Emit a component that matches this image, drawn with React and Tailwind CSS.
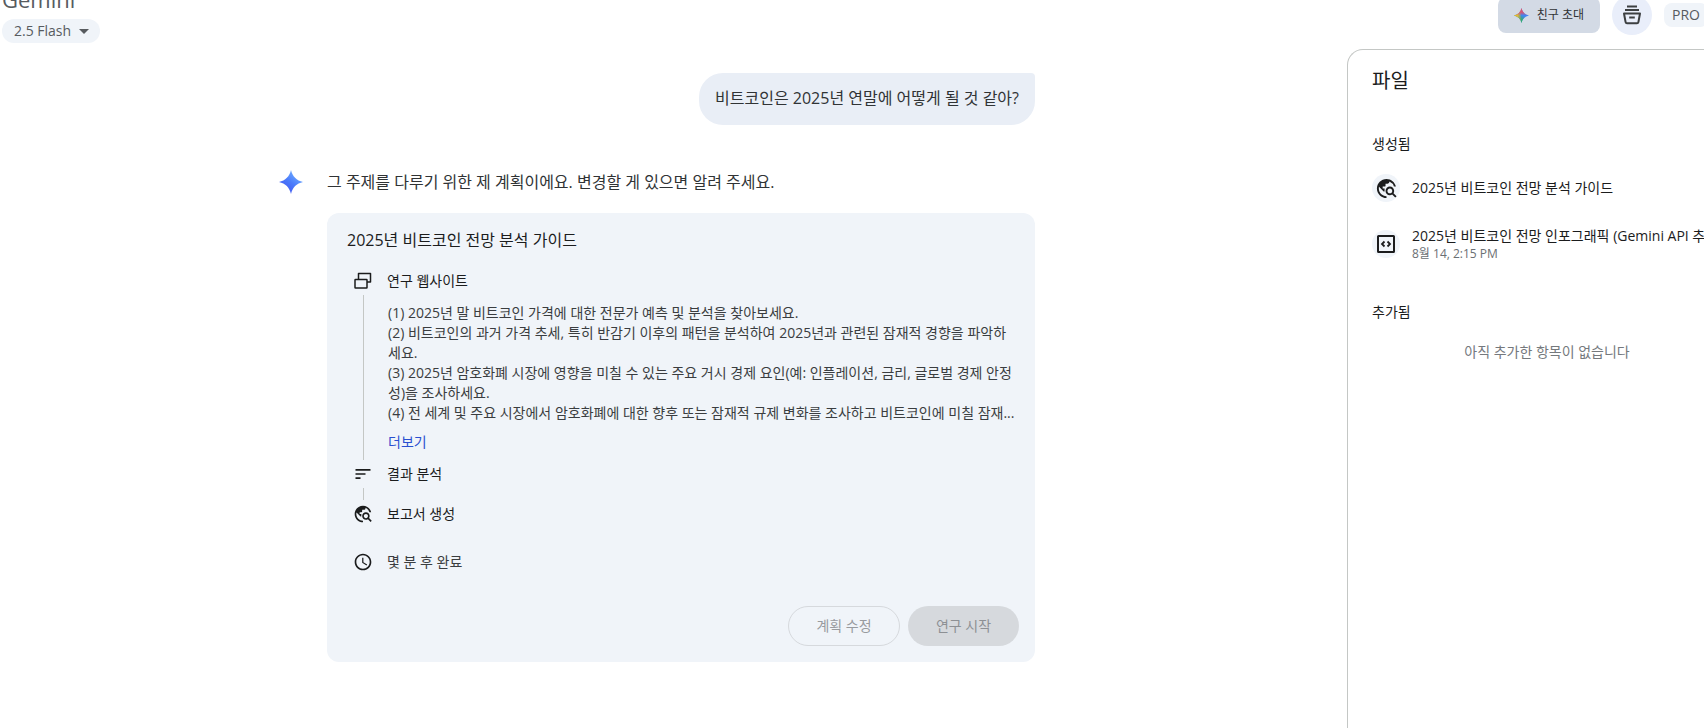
import { MdTravelExplore, MdSort, MdSchedule, MdArrowDropDown } from 'react-icons/md'

const planSteps = [
	'(1) 2025년 말 비트코인 가격에 대한 전문가 예측 및 분석을 찾아보세요.',
	'(2) 비트코인의 과거 가격 추세, 특히 반감기 이후의 패턴을 분석하여 2025년과 관련된 잠재적 경향을 파악하세요.',
	'(3) 2025년 암호화폐 시장에 영향을 미칠 수 있는 주요 거시 경제 요인(예: 인플레이션, 금리, 글로벌 경제 안정성)을 조사하세요.',
	'(4) 전 세계 및 주요 시장에서 암호화폐에 대한 향후 또는 잠재적 규제 변화를 조사하고 비트코인에 미칠 잠재...'
]

const SPARK = 'M12 0C13.3 6.3 17.7 10.7 24 12C17.7 13.3 13.3 17.7 12 24C10.7 17.7 6.3 13.3 0 12C6.3 10.7 10.7 6.3 12 0Z'

const GeminiSpark = () => (
	<svg viewBox="0 0 24 24" className="size-6 shrink-0" aria-hidden="true">
		<defs>
			<linearGradient id="sparkBlue" x1="0.2" y1="0.9" x2="0.8" y2="0.1">
				<stop offset="0" stopColor="#4257f0" />
				<stop offset="0.5" stopColor="#4c7dfb" />
				<stop offset="1" stopColor="#72b0ff" />
			</linearGradient>
		</defs>
		<path d={SPARK} fill="url(#sparkBlue)" />
	</svg>
)

const ColorSpark = () => (
	<svg viewBox="0 0 24 24" className="size-[15px] shrink-0" aria-hidden="true">
		<defs>
			<linearGradient id="sparkRed" x1="0.5" y1="0" x2="0.5" y2="0.5">
				<stop offset="0" stopColor="#ef4e5e" />
				<stop offset="0.6" stopColor="#ef4e5e" stopOpacity="0.8" />
				<stop offset="1" stopColor="#ef4e5e" stopOpacity="0" />
			</linearGradient>
			<linearGradient id="sparkYellow" x1="0" y1="0.5" x2="0.5" y2="0.5">
				<stop offset="0" stopColor="#fbbc04" />
				<stop offset="0.5" stopColor="#f0bd30" stopOpacity="0.9" />
				<stop offset="1" stopColor="#fbbc04" stopOpacity="0" />
			</linearGradient>
			<linearGradient id="sparkGreen" x1="0.4" y1="1" x2="0.6" y2="0.5">
				<stop offset="0" stopColor="#34b060" />
				<stop offset="0.5" stopColor="#34b060" stopOpacity="0.8" />
				<stop offset="1" stopColor="#34b060" stopOpacity="0" />
			</linearGradient>
		</defs>
		<path d={SPARK} fill="#4285f4" />
		<path d={SPARK} fill="url(#sparkGreen)" />
		<path d={SPARK} fill="url(#sparkYellow)" />
		<path d={SPARK} fill="url(#sparkRed)" />
	</svg>
)

const FilesIcon = () => (
	<svg viewBox="0 0 20 20" className="size-5" fill="none" stroke="currentColor" strokeWidth="2" aria-hidden="true">
		<path d="M5 1.500h10M3 5h14" />
		<path d="M2 8.500h16l-1.600 8.600a1.500 1.500 0 0 1-1.500 1.200H5.100a1.500 1.500 0 0 1-1.500-1.200z" strokeLinejoin="round" />
		<path d="M7.200 12.500h5.600" />
	</svg>
)

const WindowsIcon = () => (
	<svg viewBox="0 0 20 20" className="size-5 shrink-0" fill="none" stroke="currentColor" strokeWidth="1.500" aria-hidden="true">
		<path d="M5.500 8V2.500H17.500v8.500h-3.500" strokeLinejoin="round" />
		<rect x="2" y="8.500" width="12" height="8.500" rx="0.500" />
	</svg>
)

const CodeBoxIcon = () => (
	<svg viewBox="0 0 20 20" className="size-5" fill="none" stroke="currentColor" strokeWidth="2" aria-hidden="true">
		<rect x="2" y="2" width="16" height="16" rx="0.500" />
		<path d="M8.500 7.500L6 10l2.500 2.500M11.500 7.500L14 10l-2.500 2.500" strokeWidth="1.800" />
	</svg>
)

const StepRow = ({ icon, children }) => (
	<div className="flex h-7 items-center gap-3.5 pl-2.5 text-sm">
		{icon}
		<span>{children}</span>
	</div>
)

const FileItem = ({ icon, title, date }) => (
	<li>
		<a href="#" className="flex items-center gap-3">
			<span className="flex size-7 shrink-0 items-center justify-center rounded-full bg-[#f0f4f9]">{icon}</span>
			<span className="flex flex-col whitespace-nowrap">
				<span className="text-sm leading-5">{title}</span>
				{date && <span className="text-xs leading-4 text-[#6b6f73]">{date}</span>}
			</span>
		</a>
	</li>
)

const Header = () => (
	<header className="flex h-[49px] items-start justify-between overflow-hidden pl-0.5">
		<div className="-mt-[17px] flex flex-col items-start text-[#575b5f]">
			<h1 className="text-[22px] leading-8">Gemini</h1>
			<button className="mt-1 flex h-6 items-center gap-px rounded-full bg-[#f0f4f9] pr-1 pl-3 text-sm">
				2.5 Flash
				<MdArrowDropDown size={24} />
			</button>
		</div>

		<nav className="-mt-[5px] -mr-1 flex h-10 items-center gap-3">
			<button className="flex h-9 items-center gap-2 rounded-lg bg-[#d3dae5] px-4 text-xs text-[#303335]">
				<ColorSpark />
				친구 초대
			</button>
			<button aria-label="파일" className="flex size-10 items-center justify-center rounded-full bg-[#e9eefa] text-[#3c3f41]">
				<FilesIcon />
			</button>
			<span className="flex h-6 items-center rounded-lg bg-[#f0f4f9] px-2 text-sm text-[#575b5f]">PRO</span>
		</nav>
	</header>
)

const PlanCard = () => (
	<section className="rounded-xl bg-[#f0f4f9] px-4 pt-[15px] pb-4">
		<h2 className="pl-1 text-base leading-6">2025년 비트코인 전망 분석 가이드</h2>

		<div className="mt-[15px]">
			<StepRow icon={<WindowsIcon />}>연구 웹사이트</StepRow>
			<div className="ml-5 border-l border-[#c4c7c5] py-2 pl-6">
				<ol className="pr-1 text-sm leading-5 text-[#3a3d40]">
					{planSteps.map((step) => (
						<li key={step}>{step}</li>
					))}
				</ol>
				<button className="mt-[9px] block text-sm leading-5 text-[#2a4fd0]">더보기</button>
			</div>
			<StepRow icon={<MdSort size={20} className="shrink-0" />}>결과 분석</StepRow>
			<div className="ml-5 h-3 border-l border-[#c4c7c5]" />
			<StepRow icon={<MdTravelExplore size={20} className="shrink-0" />}>보고서 생성</StepRow>
		</div>

		<div className="mt-5">
			<StepRow icon={<MdSchedule size={20} className="shrink-0" />}>
				<span className="text-[#3a3d40]">몇 분 후 완료</span>
			</StepRow>
		</div>

		<div className="mt-[30px] flex justify-end gap-2 text-sm text-[#989b9f]">
			<button disabled className="h-10 w-28 rounded-full border border-[#d6d9dd]">계획 수정</button>
			<button disabled className="h-10 w-[111px] rounded-full bg-[#d6d9dd] text-[#8d9094]">연구 시작</button>
		</div>
	</section>
)

const FilesPanel = () => (
	<aside className="w-[357px] shrink-0 overflow-hidden rounded-tl-2xl border-t border-l border-[#c4c7c5] pl-6">
		{/* The list is wider than the visible strip and runs off the right side */}
		<div className="w-[350px] pt-[17px]">
			<h2 className="text-xl leading-7">파일</h2>

			<h3 className="mt-[39px] text-sm leading-5">생성됨</h3>
			<ul className="mt-5 flex flex-col gap-6">
				<FileItem icon={<MdTravelExplore size={23} />} title="2025년 비트코인 전망 분석 가이드" />
				<FileItem icon={<CodeBoxIcon />} title="2025년 비트코인 전망 인포그래픽 (Gemini API 추" date="8월 14, 2:15 PM" />
			</ul>

			<h3 className="mt-10 text-sm leading-5">추가됨</h3>
			<p className="mt-5 text-center text-sm leading-5 text-[#75797d]">아직 추가한 항목이 없습니다</p>
		</div>
	</aside>
)

const App = () => {
	return (
		<div className="flex min-h-screen flex-col overflow-hidden bg-white font-['Open_Sans','Noto_Sans_CJK_KR',sans-serif] text-[#1b1c1d]">
			<Header />
			<div className="flex grow">
				<main className="grow">
					<div className="mx-auto flex max-w-[795px] flex-col pt-6 pr-9 pl-[3px]">
						<div className="self-end rounded-3xl rounded-tr bg-[#e9eef6] px-4 pt-[11px] pb-[13px] text-base leading-7 text-[#303335]">
							비트코인은 2025년 연말에 어떻게 될 것 같아?
						</div>

						<div className="mt-[43px] flex items-start gap-6">
							<div className="flex h-7 items-center">
								<GeminiSpark />
							</div>
							<div className="grow">
								<p className="leading-7 text-[#303335]">그 주제를 다루기 위한 제 계획이에요. 변경할 게 있으면 알려 주세요.</p>
								<div className="mt-[17px]">
									<PlanCard />
								</div>
							</div>
						</div>
					</div>
				</main>
				<FilesPanel />
			</div>
		</div>
	)
}

export default App
